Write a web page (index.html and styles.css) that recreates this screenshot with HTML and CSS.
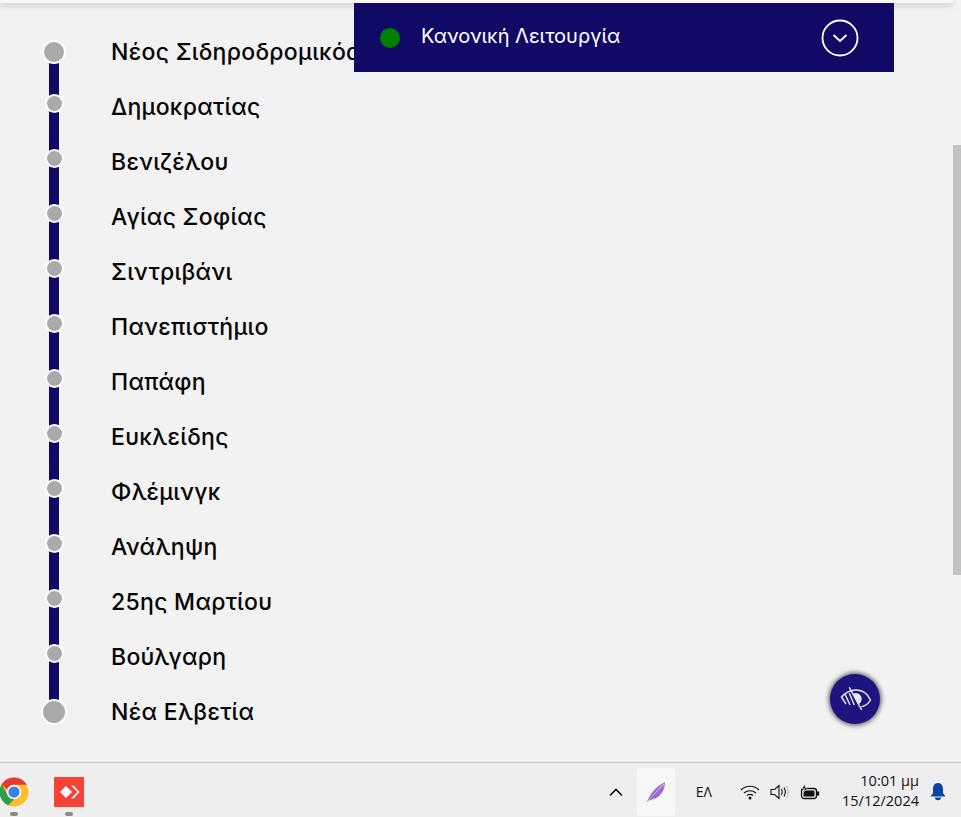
FILE: index.html
```html
<!DOCTYPE html>
<html lang="el">
<head>
<meta charset="utf-8">
<title>Γραμμή</title>
<link rel="stylesheet" href="styles.css">
</head>
<body>
<div class="screen">
  <main class="page">
    <div class="topbar"></div>
    <ol class="line">
      <li class="stop first"><span class="dot"></span><span class="name">Νέος Σιδηροδρομικός</span></li>
      <li class="stop"><span class="dot"></span><span class="name">Δημοκρατίας</span></li>
      <li class="stop"><span class="dot"></span><span class="name">Βενιζέλου</span></li>
      <li class="stop"><span class="dot"></span><span class="name">Αγίας Σοφίας</span></li>
      <li class="stop"><span class="dot"></span><span class="name">Σιντριβάνι</span></li>
      <li class="stop"><span class="dot"></span><span class="name">Πανεπιστήμιο</span></li>
      <li class="stop"><span class="dot"></span><span class="name">Παπάφη</span></li>
      <li class="stop"><span class="dot"></span><span class="name">Ευκλείδης</span></li>
      <li class="stop"><span class="dot"></span><span class="name">Φλέμινγκ</span></li>
      <li class="stop"><span class="dot"></span><span class="name">Ανάληψη</span></li>
      <li class="stop"><span class="dot"></span><span class="name">25ης Μαρτίου</span></li>
      <li class="stop"><span class="dot"></span><span class="name">Βούλγαρη</span></li>
      <li class="stop last"><span class="dot"></span><span class="name">Νέα Ελβετία</span></li>
    </ol>
    <section class="status">
      <span class="led"></span>
      <span class="status-text">Κανονική Λειτουργία</span>
      <svg class="chev" viewBox="0 0 38 38" width="38" height="38"><circle cx="19" cy="19" r="17.500" fill="none" stroke="#fff" stroke-width="1.800"/><path d="M12.500 16l6.500 6 6.500-6" fill="none" stroke="#fff" stroke-width="1.800"/></svg>
    </section>
    <div class="scroll-thumb"></div>
    <button class="fab" aria-label="Προσβασιμότητα">
      <svg viewBox="0 0 34 34" width="34" height="34"><path d="M3 15.500C8 10 13 7.800 18.500 8C25 8.300 30 12.500 32.500 18C30.500 21.500 27.500 24 23.500 24.700" fill="none" stroke="#e8e8ee" stroke-width="1.400"/><path d="M15.500 11.500a5.500 5.500 0 0 1 4.500 11z" fill="#e8e8ee"/><path d="M11.300 5.300L23.700 28" stroke="#e8e8ee" stroke-width="1.500" fill="none"/><path d="M7 12l5 11M3.500 15l4.500 7M11.300 11.300l5 11.700" stroke="#e8e8ee" stroke-width="1.400" fill="none"/></svg>
    </button>
  </main>
  <footer class="taskbar">
    <div class="apps">
      <div class="app">
        <svg viewBox="0 0 32 32" width="30" height="30"><circle cx="16" cy="16" r="15.500" fill="#fbc02d"/><path d="M16 .5a15.500 15.500 0 0 1 13.500 7.800H16a7.700 7.700 0 0 0-7.200 5L2.900 7.800A15.500 15.500 0 0 1 16 .5z" fill="#e53935"/><path d="M2.900 7.800l6.500 11.800a7.700 7.700 0 0 0 6.800 4.100L9.800 30.200A15.500 15.500 0 0 1 2.900 7.800z" fill="#2e9e4f"/><circle cx="16" cy="16" r="7.700" fill="#fff"/><circle cx="16" cy="16" r="6" fill="#3b7fe8"/></svg>
        <i class="pip"></i>
      </div>
      <div class="app">
        <svg viewBox="0 0 30 30" width="30" height="30"><rect width="30" height="30" fill="#f44336"/><path d="M12 9L18 15 12 21 6 15z" fill="#fff"/><path d="M17 8.500l6.500 6.500-6.500 6.500h2.500l6-6.500-6-6.500z" fill="#fff"/></svg>
        <i class="pip"></i>
      </div>
    </div>
    <div class="tray">
      <svg class="caret" viewBox="0 0 16 10" width="16" height="10"><path d="M2 8.500l6-6 6 6" fill="none" stroke="#111" stroke-width="1.600"/></svg>
      <div class="tray-app">
        <svg viewBox="0 0 24 24" width="24" height="24"><defs><linearGradient id="quill" x1="0" y1="1" x2="1" y2="0"><stop offset="0" stop-color="#8e55c8"/><stop offset="1" stop-color="#a87bd8"/></linearGradient></defs><path d="M3 22C6 14 12 6 21 2C21 10 17 17 9 19C7 19.500 5 20.500 3 22z" fill="url(#quill)"/><path d="M4 21C9 15 14 10 20 4" stroke="#e8dcf5" stroke-width=".8" fill="none"/></svg>
      </div>
      <span class="lang">ΕΛ</span>
      <div class="sys">
        <svg viewBox="0 0 20 16" width="20" height="16"><path d="M1 6c5-5 13-5 18 0M4 9c3.500-3 8.500-3 12 0M7 11.500c2-1.500 4-1.500 6 0" fill="none" stroke="#111" stroke-width="1.200"/><circle cx="10" cy="14" r="1.500" fill="#111"/></svg>
        <svg viewBox="0 0 20 16" width="20" height="16"><path d="M1 5.500h3.500L9 1.500v13L4.500 10.500H1z" fill="none" stroke="#111" stroke-width="1.100"/><path d="M11.500 5c1 1.800 1 4.200 0 6M14 3.500c1.600 2.800 1.600 6.200 0 9" fill="none" stroke="#111" stroke-width="1.100"/><path d="M16.500 2c2 3.500 2 8.500 0 12" fill="none" stroke="#bbb" stroke-width="1.100"/></svg>
        <svg viewBox="0 0 20 16" width="20" height="16"><rect x="1.500" y="4.500" width="15" height="10" rx="2.500" fill="none" stroke="#111" stroke-width="1.300"/><rect x="3.500" y="6.500" width="11" height="6" rx="1" fill="#111"/><rect x="17" y="7.500" width="2.200" height="4" fill="#111"/><path d="M5 0L2 4.500h3L3.500 8.500 8 3.500H5z" fill="#111" stroke="#eee" stroke-width=".5"/></svg>
      </div>
      <div class="clock"><span>10:01 μμ</span><span>15/12/2024</span></div>
      <svg class="bell" viewBox="0 0 18 20" width="18" height="20"><path d="M9 1c-3.500 0-5 3-5 6v4l-2.500 3.500h15L14 11V7c0-3-1.500-6-5-6z" fill="#0b44a0"/><path d="M6 15.500a3 2.800 0 0 0 6 0z" fill="#0b44a0"/></svg>
    </div>
  </footer>
</div>
</body>
</html>
```
FILE: styles.css
```css
* { box-sizing: border-box; }
html, body { margin: 0; height: 100%; overflow: hidden; }
body { font-family: Inter, "Noto Sans", sans-serif; background: #f2f2f2; }
.screen { height: 817px; display: flex; flex-direction: column; }
.page { position: relative; height: 762px; overflow: hidden; background: #f2f2f2; }
.topbar { height: 3px; background: #f7f7f7; width: 953px; box-shadow: 0 2px 6px rgba(0,0,0,.25); }
.line { list-style: none; margin: 0; padding: 22px 0 0 54px; }
.stop { position: relative; display: flex; align-items: center; height: 55px; }
.stop::before { content: ""; position: absolute; left: -5px; top: 27px; width: 10px; height: 55px; background: #100a66; }
.stop.last::before { display: none; }
.dot { position: relative; width: 19px; height: 19px; margin-left: -9.500px; margin-right: 47.500px; top: -4px; flex: none; border-radius: 50%; background: #aaa; border: 2px solid #fff; }
.stop.first .dot { width: 24px; height: 24px; margin-left: -12px; margin-right: 45px; top: -.5px; }
.stop.last .dot { width: 26px; height: 26px; margin-left: -13px; margin-right: 44px; top: -.5px; }
.name { font-size: 23px; font-weight: 500; letter-spacing: .3px; color: #050505; white-space: nowrap; position: relative; top: -1px; }
.status { position: absolute; left: 354px; top: 3px; width: 540px; height: 69px; background: #100a66; display: flex; align-items: center; padding: 0 35px 0 26px; color: #fff; }
.led { width: 20px; height: 20px; border-radius: 50%; background: #008000; flex: none; }
.status-text { margin-left: 21px; flex: 1; font-size: 20px; position: relative; top: -2px; }
.scroll-thumb { position: absolute; right: 0; top: 145px; width: 8px; height: 430px; background: #c2c2c2; }
.fab { position: absolute; left: 830px; top: 674px; width: 50px; height: 50px; border-radius: 50%; border: 0; padding: 0; background: #1d1480; box-shadow: 0 0 5px 1px rgba(0,0,0,.7); display: flex; align-items: center; justify-content: center; }
.taskbar { height: 55px; background: #eeeeee; border-top: 1px solid #c4c4c4; display: flex; justify-content: space-between; position: relative; overflow: hidden; }
.apps { display: flex; align-items: flex-start; padding-top: 14px; margin-left: -1px; gap: 25px; }
.app { display: flex; flex-direction: column; align-items: center; width: 30px; }
.pip { width: 8px; height: 4px; border-radius: 2px; background: #8a8a8a; margin-top: 5px; display: block; }
.tray { display: flex; align-items: center; padding-top: 3px; }
.caret { margin-right: 13px; }
.tray-app { width: 38px; height: 48px; margin-top: 1px; background: #f7f7f7; border-radius: 4px; display: flex; align-items: center; justify-content: center; }
.lang { font-family: "Open Sans", sans-serif; font-size: 14px; margin: 0 28px 0 21px; color: #111; }
.sys { display: flex; align-items: center; gap: 10px; }
.clock { display: flex; flex-direction: column; align-items: flex-end; font-family: "Open Sans", sans-serif; font-size: 14.500px; line-height: 20px; color: #111; margin: -1px 10px 0 22px; }
.bell { margin-right: 14px; }
```
